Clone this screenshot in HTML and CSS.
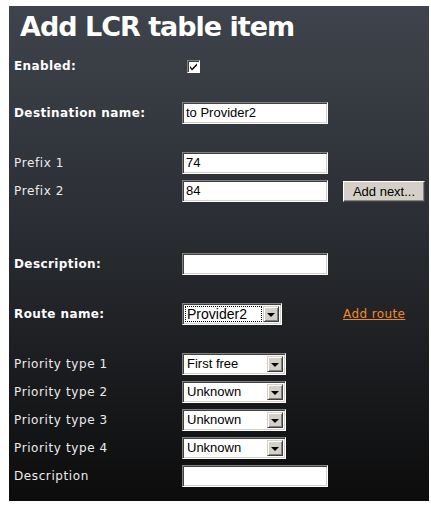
FILE: index.html
```html
<!DOCTYPE html>
<html lang="en">
<head>
  <meta charset="UTF-8">
  <title>Add LCR table item</title>
  <link rel="stylesheet" href="styles.css">
</head>
<body>
  <div id="lcr-panel">
    <h1 class="panel-title">Add LCR table item</h1>
    <div class="form-body">
      <div class="form-row">
        <span class="field-label strong">Enabled:</span>
        <span class="checkbox">
          <svg width="9" height="9" viewBox="0 0 9 9"><path d="M1 4 L3 6.5 L8 1.5 L8 3.5 L3 8.5 L1 6 Z" fill="#000"/></svg>
        </span>
      </div>
      <div class="form-row spaced">
        <span class="field-label strong">Destination name:</span>
        <span class="text-input">to Provider2</span>
      </div>
      <div class="form-row spaced-lg">
        <span class="field-label">Prefix 1</span>
        <span class="text-input">74</span>
      </div>
      <div class="form-row">
        <span class="field-label">Prefix 2</span>
        <span class="text-input">84</span>
        <button class="push-btn">Add next...</button>
      </div>
      <div class="form-row section">
        <span class="field-label strong">Description:</span>
        <span class="text-input"></span>
      </div>
      <div class="form-row spaced-lg">
        <span class="field-label strong">Route name:</span>
        <span class="combo narrow">
          <span class="combo-value focused">Provider2</span>
          <span class="combo-btn"><span class="arrow"></span></span>
        </span>
        <a class="add-link" href="#">Add route</a>
      </div>
      <div class="form-row spaced-lg">
        <span class="field-label">Priority type 1</span>
        <span class="combo">
          <span class="combo-value">First free</span>
          <span class="combo-btn"><span class="arrow"></span></span>
        </span>
      </div>
      <div class="form-row">
        <span class="field-label">Priority type 2</span>
        <span class="combo">
          <span class="combo-value">Unknown</span>
          <span class="combo-btn"><span class="arrow"></span></span>
        </span>
      </div>
      <div class="form-row">
        <span class="field-label">Priority type 3</span>
        <span class="combo">
          <span class="combo-value">Unknown</span>
          <span class="combo-btn"><span class="arrow"></span></span>
        </span>
      </div>
      <div class="form-row">
        <span class="field-label">Priority type 4</span>
        <span class="combo">
          <span class="combo-value">Unknown</span>
          <span class="combo-btn"><span class="arrow"></span></span>
        </span>
      </div>
      <div class="form-row">
        <span class="field-label">Description</span>
        <span class="text-input"></span>
      </div>
    </div>
  </div>
</body>
</html>
```

FILE: styles.css
```css
body {
  margin: 0;
  background-color: #fff;
}

#lcr-panel {
  margin: 6px 0 0 9px;
  width: 420px;
  height: 495px;
  box-sizing: border-box;
  background: linear-gradient(#3f444c 0%, #2a2d33 45%, #0c0c0c 100%);
}

.panel-title {
  margin: 0;
  height: 46px;
  padding-left: 11px;
  font-family: "DejaVu Sans", Verdana, sans-serif;
  font-size: 27px;
  font-weight: bold;
  letter-spacing: -1px;
  line-height: 42px;
  color: #fff;
}

.form-body {
  padding-left: 5px;
}

.form-row {
  display: grid;
  grid-template-columns: 168px 161px auto;
  align-items: center;
  height: 28px;
}

.form-row.spaced {
  margin-top: 19px;
}

.form-row.spaced-lg {
  margin-top: 22px;
}

.form-row.section {
  margin-top: 45px;
}

.field-label {
  font-family: "DejaVu Sans", Verdana, sans-serif;
  font-size: 12px;
  letter-spacing: 0.6px;
  color: #ececec;
}

.field-label.strong {
  font-weight: bold;
  letter-spacing: 0.4px;
  color: #fff;
}

.checkbox {
  margin-left: 5px;
  width: 13px;
  height: 13px;
  box-sizing: border-box;
  background: #fff;
  border: 1px solid;
  border-color: #808080 #fff #fff #808080;
  box-shadow: inset 1px 1px #404040;
  display: flex;
  align-items: center;
  justify-content: center;
}

.text-input {
  width: 146px;
  height: 22px;
  box-sizing: border-box;
  background: #fff;
  border: 1px solid;
  border-color: #808080 #fff #fff #808080;
  box-shadow: inset 1px 1px #404040, inset -1px -1px #d4d0c8;
  padding: 0 3px;
  font-family: "Liberation Sans", Arial, sans-serif;
  font-size: 13px;
  line-height: 20px;
  color: #000;
}

.combo {
  width: 104px;
  height: 22px;
  box-sizing: border-box;
  background: #fff;
  border: 1px solid;
  border-color: #808080 #fff #fff #808080;
  box-shadow: inset 1px 1px #404040, inset -1px -1px #d4d0c8;
  padding: 2px;
  display: flex;
  align-items: stretch;
}

.combo.narrow {
  width: 100px;
}

.combo-value {
  flex: 1;
  padding-left: 2px;
  font-family: "Liberation Sans", Arial, sans-serif;
  font-size: 13px;
  line-height: 16px;
  color: #000;
  white-space: nowrap;
  overflow: hidden;
}

.combo-value.focused {
  font-size: 14px;
  outline: 1px dotted #000;
  outline-offset: -1px;
  margin-right: 1px;
}

.combo-btn {
  width: 16px;
  box-sizing: border-box;
  background: #d4d0c8;
  border: 1px solid;
  border-color: #d4d0c8 #404040 #404040 #d4d0c8;
  box-shadow: inset 1px 1px #fff, inset -1px -1px #808080;
  display: flex;
  align-items: center;
  justify-content: center;
}

.arrow {
  width: 0;
  height: 0;
  border-left: 4px solid transparent;
  border-right: 4px solid transparent;
  border-top: 4px solid #000;
  margin-top: 1px;
}

.push-btn {
  width: 82px;
  height: 21px;
  padding: 0;
  background: #d4d0c8;
  border: 1px solid;
  border-color: #fff #404040 #404040 #fff;
  box-shadow: inset -1px -1px #808080;
  font-family: "Liberation Sans", Arial, sans-serif;
  font-size: 13px;
  color: #000;
}

.add-link {
  font-family: "DejaVu Sans", Verdana, sans-serif;
  font-size: 12px;
  letter-spacing: 0.4px;
  color: #ef8a2b;
  text-decoration: underline;
}
```
